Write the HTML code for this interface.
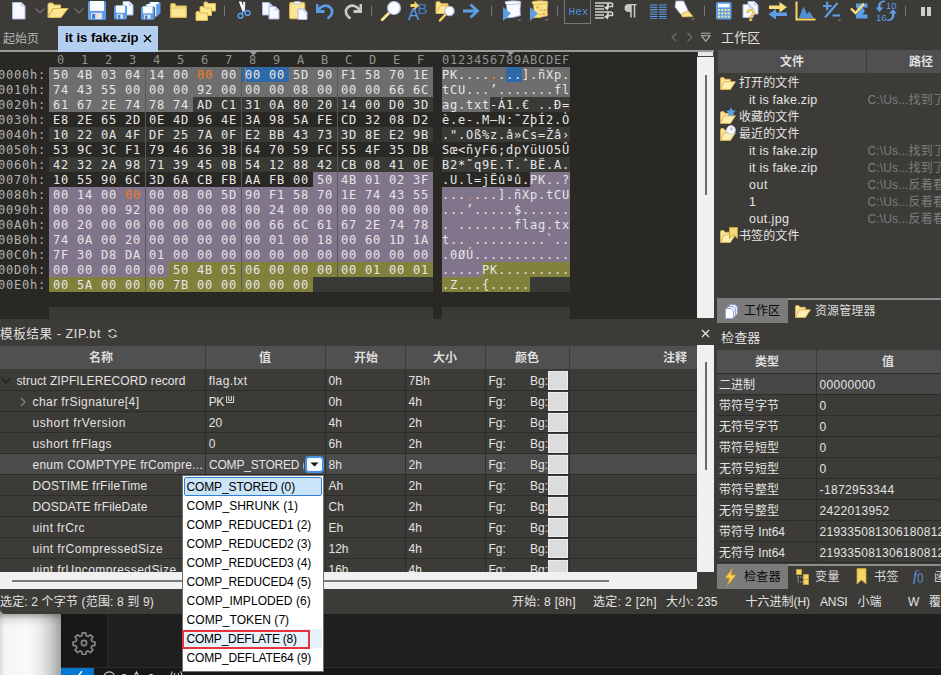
<!DOCTYPE html>
<html lang="zh-CN"><head><meta charset="utf-8"><title>010 Editor - it is fake.zip</title>
<style>
html,body{margin:0;padding:0;background:#1f1f1f;}
#root{position:relative;width:941px;height:675px;overflow:hidden;background:#3c3b37;font-family:"Liberation Sans","Noto Sans CJK SC",sans-serif;font-size:12px;color:#e4e4e4;}
.a{position:absolute;}
.t{white-space:pre;}
.m{font-family:"DejaVu Sans Mono","Liberation Mono",monospace;}
</style></head>
<body><div id="root">
<div class="a" style="left:0px;top:50px;width:714px;height:2px;background:#9a9a9a;"></div>
<div class="a" style="left:58px;top:26px;width:100px;height:26px;background:#b5cff0;"></div>
<span class="a t" id="t1" style="left:3px;top:30.5px;font-size:12px;line-height:16px;color:#b4b4b4;letter-spacing:-0.005px;">起始页</span>
<span class="a t" id="t2" style="left:65px;top:30.0px;font-size:13px;line-height:16px;color:#000;font-weight:bold;letter-spacing:-0.013px;">it is fake.zip</span>
<svg class="a" style="left:143px;top:34px" width="9" height="9" viewBox="0 0 9 9"><path d="M1 1L8 8M8 1L1 8" stroke="#000" stroke-width="1.4" fill="none"/></svg>
<svg class="a" style="left:670px;top:31px" width="42" height="13" viewBox="0 0 42 13"><path d="M6.3 2L2 6.2L6.3 10.4M17.5 2L21.8 6.2L17.5 10.4" stroke="#707070" stroke-width="1.2" fill="none"/><path d="M31 2.2H40.5M31.6 4.8H40L35.8 10.4Z" stroke="#b4b4b4" stroke-width="1.1" fill="none"/></svg>
<span class="a t" id="t3" style="left:721px;top:29.5px;font-size:13px;line-height:16px;color:#e0e0e0;letter-spacing:0.167px;">工作区</span>
<div class="a" style="left:0px;top:52px;width:697px;height:267px;background:#292824;"></div>
<div class="a" style="left:49px;top:67px;width:384px;height:15px;background:#393935;"></div>
<div class="a" style="left:442px;top:67px;width:128px;height:15px;background:#393935;"></div>
<div class="a" style="left:49px;top:67px;width:192px;height:15px;background:#6e6e6e;"></div>
<div class="a" style="left:442px;top:67px;width:64px;height:15px;background:#6e6e6e;"></div>
<div class="a" style="left:241px;top:67px;width:48px;height:15px;background:#2e6aa8;"></div>
<div class="a" style="left:506px;top:67px;width:16px;height:15px;background:#2e6aa8;"></div>
<div class="a" style="left:289px;top:67px;width:144px;height:15px;background:#6e6e6e;"></div>
<div class="a" style="left:522px;top:67px;width:48px;height:15px;background:#6e6e6e;"></div>
<div class="a" style="left:49px;top:82px;width:384px;height:15px;background:#6e6e6e;"></div>
<div class="a" style="left:442px;top:82px;width:128px;height:15px;background:#6e6e6e;"></div>
<div class="a" style="left:49px;top:97px;width:384px;height:15px;background:#393935;"></div>
<div class="a" style="left:442px;top:97px;width:128px;height:15px;background:#393935;"></div>
<div class="a" style="left:49px;top:97px;width:144px;height:15px;background:#6e6e6e;"></div>
<div class="a" style="left:442px;top:97px;width:48px;height:15px;background:#6e6e6e;"></div>
<div class="a" style="left:49px;top:127px;width:384px;height:15px;background:#393935;"></div>
<div class="a" style="left:442px;top:127px;width:128px;height:15px;background:#393935;"></div>
<div class="a" style="left:49px;top:157px;width:384px;height:15px;background:#393935;"></div>
<div class="a" style="left:442px;top:157px;width:128px;height:15px;background:#393935;"></div>
<div class="a" style="left:313px;top:172px;width:120px;height:15px;background:#81758b;"></div>
<div class="a" style="left:530px;top:172px;width:40px;height:15px;background:#81758b;"></div>
<div class="a" style="left:49px;top:187px;width:384px;height:15px;background:#393935;"></div>
<div class="a" style="left:442px;top:187px;width:128px;height:15px;background:#393935;"></div>
<div class="a" style="left:49px;top:187px;width:384px;height:15px;background:#81758b;"></div>
<div class="a" style="left:442px;top:187px;width:128px;height:15px;background:#81758b;"></div>
<div class="a" style="left:49px;top:202px;width:384px;height:15px;background:#81758b;"></div>
<div class="a" style="left:442px;top:202px;width:128px;height:15px;background:#81758b;"></div>
<div class="a" style="left:49px;top:217px;width:384px;height:15px;background:#393935;"></div>
<div class="a" style="left:442px;top:217px;width:128px;height:15px;background:#393935;"></div>
<div class="a" style="left:49px;top:217px;width:384px;height:15px;background:#81758b;"></div>
<div class="a" style="left:442px;top:217px;width:128px;height:15px;background:#81758b;"></div>
<div class="a" style="left:49px;top:232px;width:384px;height:15px;background:#81758b;"></div>
<div class="a" style="left:442px;top:232px;width:128px;height:15px;background:#81758b;"></div>
<div class="a" style="left:49px;top:247px;width:384px;height:15px;background:#393935;"></div>
<div class="a" style="left:442px;top:247px;width:128px;height:15px;background:#393935;"></div>
<div class="a" style="left:49px;top:247px;width:384px;height:15px;background:#81758b;"></div>
<div class="a" style="left:442px;top:247px;width:128px;height:15px;background:#81758b;"></div>
<div class="a" style="left:49px;top:262px;width:120px;height:15px;background:#81758b;"></div>
<div class="a" style="left:442px;top:262px;width:40px;height:15px;background:#81758b;"></div>
<div class="a" style="left:169px;top:262px;width:264px;height:15px;background:#81813c;"></div>
<div class="a" style="left:482px;top:262px;width:88px;height:15px;background:#81813c;"></div>
<div class="a" style="left:49px;top:277px;width:384px;height:15px;background:#393935;"></div>
<div class="a" style="left:442px;top:277px;width:128px;height:15px;background:#393935;"></div>
<div class="a" style="left:49px;top:277px;width:264px;height:15px;background:#81813c;"></div>
<div class="a" style="left:442px;top:277px;width:88px;height:15px;background:#81813c;"></div>
<div class="a" style="left:49px;top:307px;width:384px;height:12px;background:#393935;"></div>
<div class="a" style="left:442px;top:307px;width:128px;height:12px;background:#393935;"></div>
<div class="a" style="left:145px;top:67px;width:1px;height:225px;background:#595957;"></div>
<div class="a" style="left:241px;top:67px;width:1px;height:225px;background:#595957;"></div>
<div class="a" style="left:337px;top:67px;width:1px;height:210px;background:#595957;"></div>
<div class="a" style="left:245px;top:68px;width:1px;height:14px;background:#8a8274;"></div>
<span class="a t" id="t4" style="left:49px;top:51.5px;font-size:12px;line-height:16px;color:#929292;font-family:'DejaVu Sans Mono','Liberation Mono',monospace;letter-spacing:0.7754px;"> 0  1  2  3  4  5  6  7  8  9  A  B  C  D  E  F</span>
<span class="a t" id="t5" style="left:442px;top:51.5px;font-size:12px;line-height:16px;color:#929292;font-family:'DejaVu Sans Mono','Liberation Mono',monospace;letter-spacing:0.7754px;">0123456789ABCDEF</span>
<svg class="a" style="left:250px;top:52px" width="7" height="4" viewBox="0 0 7 4"><path d="M0 0H7L3.5 3.5Z" fill="#9a9a9a"/></svg>
<svg class="a" style="left:507px;top:52px" width="7" height="4" viewBox="0 0 7 4"><path d="M0 0H7L3.5 3.5Z" fill="#9a9a9a"/></svg>
<span class="a t" id="t6" style="left:-2px;top:66.5px;font-size:12px;line-height:16px;color:#b4b4b4;font-family:'DejaVu Sans Mono','Liberation Mono',monospace;letter-spacing:0.7754px;">0000h:</span>
<span class="a t" id="t7" style="left:53px;top:66.5px;font-size:12px;line-height:16px;color:#e6e6e6;font-family:'DejaVu Sans Mono','Liberation Mono',monospace;letter-spacing:0.7754px;">50 4B 03 04 14 00 <span style="color:#f27a24">00</span> 00 00 00 5D 90 F1 58 70 1E</span>
<span class="a t" id="t8" style="left:442px;top:66.5px;font-size:12px;line-height:16px;color:#e6e6e6;font-family:'DejaVu Sans Mono','Liberation Mono',monospace;letter-spacing:0.7754px;">PK....<span style="color:#f27a24">.</span>...].ñXp.</span>
<span class="a t" id="t9" style="left:-2px;top:81.5px;font-size:12px;line-height:16px;color:#b4b4b4;font-family:'DejaVu Sans Mono','Liberation Mono',monospace;letter-spacing:0.7754px;">0010h:</span>
<span class="a t" id="t10" style="left:53px;top:81.5px;font-size:12px;line-height:16px;color:#e6e6e6;font-family:'DejaVu Sans Mono','Liberation Mono',monospace;letter-spacing:0.7754px;">74 43 55 00 00 00 92 00 00 00 08 00 00 00 66 6C</span>
<span class="a t" id="t11" style="left:442px;top:81.5px;font-size:12px;line-height:16px;color:#e6e6e6;font-family:'DejaVu Sans Mono','Liberation Mono',monospace;letter-spacing:0.7754px;">tCU...’.......fl</span>
<span class="a t" id="t12" style="left:-2px;top:96.5px;font-size:12px;line-height:16px;color:#b4b4b4;font-family:'DejaVu Sans Mono','Liberation Mono',monospace;letter-spacing:0.7754px;">0020h:</span>
<span class="a t" id="t13" style="left:53px;top:96.5px;font-size:12px;line-height:16px;color:#e6e6e6;font-family:'DejaVu Sans Mono','Liberation Mono',monospace;letter-spacing:0.7754px;">61 67 2E 74 78 74 AD C1 31 0A 80 20 14 00 D0 3D</span>
<span class="a t" id="t14" style="left:442px;top:96.5px;font-size:12px;line-height:16px;color:#e6e6e6;font-family:'DejaVu Sans Mono','Liberation Mono',monospace;letter-spacing:0.7754px;">ag.txt-Á1.€ ..Ð=</span>
<span class="a t" id="t15" style="left:-2px;top:111.5px;font-size:12px;line-height:16px;color:#b4b4b4;font-family:'DejaVu Sans Mono','Liberation Mono',monospace;letter-spacing:0.7754px;">0030h:</span>
<span class="a t" id="t16" style="left:53px;top:111.5px;font-size:12px;line-height:16px;color:#e6e6e6;font-family:'DejaVu Sans Mono','Liberation Mono',monospace;letter-spacing:0.7754px;">E8 2E 65 2D 0E 4D 96 4E 3A 98 5A FE CD 32 08 D2</span>
<span class="a t" id="t17" style="left:442px;top:111.5px;font-size:12px;line-height:16px;color:#e6e6e6;font-family:'DejaVu Sans Mono','Liberation Mono',monospace;letter-spacing:0.7754px;">è.e-.M–N:˜ZþÍ2.Ò</span>
<span class="a t" id="t18" style="left:-2px;top:126.5px;font-size:12px;line-height:16px;color:#b4b4b4;font-family:'DejaVu Sans Mono','Liberation Mono',monospace;letter-spacing:0.7754px;">0040h:</span>
<span class="a t" id="t19" style="left:53px;top:126.5px;font-size:12px;line-height:16px;color:#e6e6e6;font-family:'DejaVu Sans Mono','Liberation Mono',monospace;letter-spacing:0.7754px;">10 22 0A 4F DF 25 7A 0F E2 BB 43 73 3D 8E E2 9B</span>
<span class="a t" id="t20" style="left:442px;top:126.5px;font-size:12px;line-height:16px;color:#e6e6e6;font-family:'DejaVu Sans Mono','Liberation Mono',monospace;letter-spacing:0.7754px;">.&quot;.Oß%z.â»Cs=Žâ›</span>
<span class="a t" id="t21" style="left:-2px;top:141.5px;font-size:12px;line-height:16px;color:#b4b4b4;font-family:'DejaVu Sans Mono','Liberation Mono',monospace;letter-spacing:0.7754px;">0050h:</span>
<span class="a t" id="t22" style="left:53px;top:141.5px;font-size:12px;line-height:16px;color:#e6e6e6;font-family:'DejaVu Sans Mono','Liberation Mono',monospace;letter-spacing:0.7754px;">53 9C 3C F1 79 46 36 3B 64 70 59 FC 55 4F 35 DB</span>
<span class="a t" id="t23" style="left:442px;top:141.5px;font-size:12px;line-height:16px;color:#e6e6e6;font-family:'DejaVu Sans Mono','Liberation Mono',monospace;letter-spacing:0.7754px;">Sœ&lt;ñyF6;dpYüUO5Û</span>
<span class="a t" id="t24" style="left:-2px;top:156.5px;font-size:12px;line-height:16px;color:#b4b4b4;font-family:'DejaVu Sans Mono','Liberation Mono',monospace;letter-spacing:0.7754px;">0060h:</span>
<span class="a t" id="t25" style="left:53px;top:156.5px;font-size:12px;line-height:16px;color:#e6e6e6;font-family:'DejaVu Sans Mono','Liberation Mono',monospace;letter-spacing:0.7754px;">42 32 2A 98 71 39 45 0B 54 12 88 42 CB 08 41 0E</span>
<span class="a t" id="t26" style="left:442px;top:156.5px;font-size:12px;line-height:16px;color:#e6e6e6;font-family:'DejaVu Sans Mono','Liberation Mono',monospace;letter-spacing:0.7754px;">B2*˜q9E.T.ˆBË.A.</span>
<span class="a t" id="t27" style="left:-2px;top:171.5px;font-size:12px;line-height:16px;color:#b4b4b4;font-family:'DejaVu Sans Mono','Liberation Mono',monospace;letter-spacing:0.7754px;">0070h:</span>
<span class="a t" id="t28" style="left:53px;top:171.5px;font-size:12px;line-height:16px;color:#e6e6e6;font-family:'DejaVu Sans Mono','Liberation Mono',monospace;letter-spacing:0.7754px;">10 55 90 6C 3D 6A CB FB AA FB 00 50 4B 01 02 3F</span>
<span class="a t" id="t29" style="left:442px;top:171.5px;font-size:12px;line-height:16px;color:#e6e6e6;font-family:'DejaVu Sans Mono','Liberation Mono',monospace;letter-spacing:0.7754px;">.U.l=jËûªû.PK..?</span>
<span class="a t" id="t30" style="left:-2px;top:186.5px;font-size:12px;line-height:16px;color:#b4b4b4;font-family:'DejaVu Sans Mono','Liberation Mono',monospace;letter-spacing:0.7754px;">0080h:</span>
<span class="a t" id="t31" style="left:53px;top:186.5px;font-size:12px;line-height:16px;color:#e6e6e6;font-family:'DejaVu Sans Mono','Liberation Mono',monospace;letter-spacing:0.7754px;">00 14 00 <span style="color:#f27a24">00</span> 00 08 00 5D 90 F1 58 70 1E 74 43 55</span>
<span class="a t" id="t32" style="left:442px;top:186.5px;font-size:12px;line-height:16px;color:#e6e6e6;font-family:'DejaVu Sans Mono','Liberation Mono',monospace;letter-spacing:0.7754px;">...<span style="color:#f27a24">.</span>...].ñXp.tCU</span>
<span class="a t" id="t33" style="left:-2px;top:201.5px;font-size:12px;line-height:16px;color:#b4b4b4;font-family:'DejaVu Sans Mono','Liberation Mono',monospace;letter-spacing:0.7754px;">0090h:</span>
<span class="a t" id="t34" style="left:53px;top:201.5px;font-size:12px;line-height:16px;color:#e6e6e6;font-family:'DejaVu Sans Mono','Liberation Mono',monospace;letter-spacing:0.7754px;">00 00 00 92 00 00 00 08 00 24 00 00 00 00 00 00</span>
<span class="a t" id="t35" style="left:442px;top:201.5px;font-size:12px;line-height:16px;color:#e6e6e6;font-family:'DejaVu Sans Mono','Liberation Mono',monospace;letter-spacing:0.7754px;">...’.....$......</span>
<span class="a t" id="t36" style="left:-2px;top:216.5px;font-size:12px;line-height:16px;color:#b4b4b4;font-family:'DejaVu Sans Mono','Liberation Mono',monospace;letter-spacing:0.7754px;">00A0h:</span>
<span class="a t" id="t37" style="left:53px;top:216.5px;font-size:12px;line-height:16px;color:#e6e6e6;font-family:'DejaVu Sans Mono','Liberation Mono',monospace;letter-spacing:0.7754px;">00 20 00 00 00 00 00 00 00 66 6C 61 67 2E 74 78</span>
<span class="a t" id="t38" style="left:442px;top:216.5px;font-size:12px;line-height:16px;color:#e6e6e6;font-family:'DejaVu Sans Mono','Liberation Mono',monospace;letter-spacing:0.7754px;">. .......flag.tx</span>
<span class="a t" id="t39" style="left:-2px;top:231.5px;font-size:12px;line-height:16px;color:#b4b4b4;font-family:'DejaVu Sans Mono','Liberation Mono',monospace;letter-spacing:0.7754px;">00B0h:</span>
<span class="a t" id="t40" style="left:53px;top:231.5px;font-size:12px;line-height:16px;color:#e6e6e6;font-family:'DejaVu Sans Mono','Liberation Mono',monospace;letter-spacing:0.7754px;">74 0A 00 20 00 00 00 00 00 01 00 18 00 60 1D 1A</span>
<span class="a t" id="t41" style="left:442px;top:231.5px;font-size:12px;line-height:16px;color:#e6e6e6;font-family:'DejaVu Sans Mono','Liberation Mono',monospace;letter-spacing:0.7754px;">t.. .........`..</span>
<span class="a t" id="t42" style="left:-2px;top:246.5px;font-size:12px;line-height:16px;color:#b4b4b4;font-family:'DejaVu Sans Mono','Liberation Mono',monospace;letter-spacing:0.7754px;">00C0h:</span>
<span class="a t" id="t43" style="left:53px;top:246.5px;font-size:12px;line-height:16px;color:#e6e6e6;font-family:'DejaVu Sans Mono','Liberation Mono',monospace;letter-spacing:0.7754px;">7F 30 D8 DA 01 00 00 00 00 00 00 00 00 00 00 00</span>
<span class="a t" id="t44" style="left:442px;top:246.5px;font-size:12px;line-height:16px;color:#e6e6e6;font-family:'DejaVu Sans Mono','Liberation Mono',monospace;letter-spacing:0.7754px;">.0ØÚ............</span>
<span class="a t" id="t45" style="left:-2px;top:261.5px;font-size:12px;line-height:16px;color:#b4b4b4;font-family:'DejaVu Sans Mono','Liberation Mono',monospace;letter-spacing:0.7754px;">00D0h:</span>
<span class="a t" id="t46" style="left:53px;top:261.5px;font-size:12px;line-height:16px;color:#e6e6e6;font-family:'DejaVu Sans Mono','Liberation Mono',monospace;letter-spacing:0.7754px;">00 00 00 00 00 50 4B 05 06 00 00 00 00 01 00 01</span>
<span class="a t" id="t47" style="left:442px;top:261.5px;font-size:12px;line-height:16px;color:#e6e6e6;font-family:'DejaVu Sans Mono','Liberation Mono',monospace;letter-spacing:0.7754px;">.....PK.........</span>
<span class="a t" id="t48" style="left:-2px;top:276.5px;font-size:12px;line-height:16px;color:#b4b4b4;font-family:'DejaVu Sans Mono','Liberation Mono',monospace;letter-spacing:0.7754px;">00E0h:</span>
<span class="a t" id="t49" style="left:53px;top:276.5px;font-size:12px;line-height:16px;color:#e6e6e6;font-family:'DejaVu Sans Mono','Liberation Mono',monospace;letter-spacing:0.7754px;">00 5A 00 00 00 7B 00 00 00 00 00</span>
<span class="a t" id="t50" style="left:442px;top:276.5px;font-size:12px;line-height:16px;color:#e6e6e6;font-family:'DejaVu Sans Mono','Liberation Mono',monospace;letter-spacing:0.7754px;">.Z...{.....</span>
<div class="a" style="left:697px;top:52px;width:17px;height:266px;background:#f0f0f0;"></div>
<div class="a" style="left:697px;top:52px;width:17px;height:5px;background:#e8e8e8;box-sizing:border-box;border:1px solid #444;border-top:none"></div>
<div class="a" style="left:705px;top:75px;width:2px;height:120px;background:#6c6c6c;"></div>
<div class="a" style="left:718px;top:50px;width:223px;height:23px;background:#505050;"></div>
<div class="a" style="left:866px;top:50px;width:1px;height:23px;background:#3a3a3a;"></div>
<span class="a t" id="t51" style="left:792px;top:53.5px;font-size:12px;line-height:16px;color:#dedede;font-weight:bold;transform:translateX(-50%);">文件</span>
<span class="a t" id="t52" style="left:921px;top:53.5px;font-size:12px;line-height:16px;color:#dedede;font-weight:bold;transform:translateX(-50%);">路径</span>
<svg class="a" style="left:720px;top:76.5px" width="16" height="13" viewBox="0 0 16 13"><path d="M0.6 12.2V1.6Q0.6 0.6 1.6 0.6H3.7L4.9 2.3H10.3V5H4L0.6 12.2Z" fill="#fbe7a0" stroke="#e0ba55" stroke-width="0.9" stroke-linejoin="round"/><path d="M4 4.8H15.4L10.4 12.4H0.6Z" fill="#fdeeb4" stroke="#e0ba55" stroke-width="0.9" stroke-linejoin="round"/></svg>
<span class="a t" id="t53" style="left:739px;top:74.5px;font-size:12px;line-height:16px;color:#e4e4e4;letter-spacing:0.097px;">打开的文件</span>
<span class="a t" id="t54" style="left:749px;top:91.5px;font-size:12.5px;line-height:16px;color:#e4e4e4;letter-spacing:0.228px;">it is fake.zip</span>
<span class="a t" id="t55" style="left:867.5px;top:91.5px;font-size:12px;line-height:16px;color:#7d7d7d;letter-spacing:0.135px;">C:\Us...找到了</span>
<svg class="a" style="left:720px;top:110.5px" width="16" height="13" viewBox="0 0 16 13"><path d="M0.6 12.2V1.6Q0.6 0.6 1.6 0.6H3.7L4.9 2.3H10.3V5H4L0.6 12.2Z" fill="#fbe7a0" stroke="#e0ba55" stroke-width="0.9" stroke-linejoin="round"/><path d="M4 4.8H15.4L10.4 12.4H0.6Z" fill="#fdeeb4" stroke="#e0ba55" stroke-width="0.9" stroke-linejoin="round"/></svg>
<svg class="a" style="left:725.5px;top:107.0px" width="10" height="10" viewBox="0 0 10 10"><path d="M5 0.2L6.5 3.3L9.9 3.8L7.4 6.1L8 9.6L5 7.9L2 9.6L2.6 6.1L0.1 3.8L3.5 3.3Z" fill="#5b9de6"/></svg>
<span class="a t" id="t56" style="left:739px;top:108.5px;font-size:12px;line-height:16px;color:#e4e4e4;letter-spacing:0.097px;">收藏的文件</span>
<svg class="a" style="left:720px;top:127.5px" width="16" height="13" viewBox="0 0 16 13"><path d="M0.6 12.2V1.6Q0.6 0.6 1.6 0.6H3.7L4.9 2.3H10.3V5H4L0.6 12.2Z" fill="#fbe7a0" stroke="#e0ba55" stroke-width="0.9" stroke-linejoin="round"/><path d="M4 4.8H15.4L10.4 12.4H0.6Z" fill="#fdeeb4" stroke="#e0ba55" stroke-width="0.9" stroke-linejoin="round"/></svg>
<svg class="a" style="left:725.5px;top:125.0px" width="10" height="10" viewBox="0 0 10 10"><circle cx="5" cy="5" r="4.4" fill="#f6f7fc" stroke="#c3cbe6" stroke-width="0.8"/><path d="M5 2.2V5L6.8 3.4" stroke="#7f93cc" stroke-width="0.8" fill="none"/></svg>
<span class="a t" id="t57" style="left:739px;top:125.5px;font-size:12px;line-height:16px;color:#e4e4e4;letter-spacing:0.097px;">最近的文件</span>
<span class="a t" id="t58" style="left:749px;top:142.5px;font-size:12.5px;line-height:16px;color:#e4e4e4;letter-spacing:0.228px;">it is fake.zip</span>
<span class="a t" id="t59" style="left:867.5px;top:142.5px;font-size:12px;line-height:16px;color:#7d7d7d;letter-spacing:0.135px;">C:\Us...找到了</span>
<span class="a t" id="t60" style="left:749px;top:159.5px;font-size:12.5px;line-height:16px;color:#e4e4e4;letter-spacing:0.228px;">it is fake.zip</span>
<span class="a t" id="t61" style="left:867.5px;top:159.5px;font-size:12px;line-height:16px;color:#7d7d7d;letter-spacing:0.135px;">C:\Us...找到了</span>
<span class="a t" id="t62" style="left:749px;top:176.5px;font-size:12.5px;line-height:16px;color:#e4e4e4;letter-spacing:0.536px;">out</span>
<span class="a t" id="t63" style="left:867.5px;top:176.5px;font-size:12px;line-height:16px;color:#7d7d7d;letter-spacing:0.135px;">C:\Us...反着看</span>
<span class="a t" id="t64" style="left:749px;top:193.5px;font-size:12.5px;line-height:16px;color:#e4e4e4;">1</span>
<span class="a t" id="t65" style="left:867.5px;top:193.5px;font-size:12px;line-height:16px;color:#7d7d7d;letter-spacing:0.135px;">C:\Us...反着看</span>
<span class="a t" id="t66" style="left:749px;top:210.5px;font-size:12.5px;line-height:16px;color:#e4e4e4;letter-spacing:0.424px;">out.jpg</span>
<span class="a t" id="t67" style="left:867.5px;top:210.5px;font-size:12px;line-height:16px;color:#7d7d7d;letter-spacing:0.135px;">C:\Us...反着看</span>
<svg class="a" style="left:720px;top:229.5px" width="16" height="13" viewBox="0 0 16 13"><path d="M0.6 12.2V1.6Q0.6 0.6 1.6 0.6H3.7L4.9 2.3H10.3V5H4L0.6 12.2Z" fill="#fbe7a0" stroke="#e0ba55" stroke-width="0.9" stroke-linejoin="round"/><path d="M4 4.8H15.4L10.4 12.4H0.6Z" fill="#fdeeb4" stroke="#e0ba55" stroke-width="0.9" stroke-linejoin="round"/></svg>
<svg class="a" style="left:729px;top:226.5px" width="9" height="12" viewBox="0 0 9 12"><path d="M0.5 0.5H8.5V11.5L4.5 8L0.5 11.5Z" fill="#f3d67a" stroke="#c9a43c" stroke-width="0.9"/></svg>
<span class="a t" id="t68" style="left:739px;top:227.5px;font-size:12px;line-height:16px;color:#e4e4e4;letter-spacing:0.097px;">书签的文件</span>
<div class="a" style="left:788px;top:298px;width:153px;height:2px;background:#8c8c8c;"></div>
<div class="a" style="left:717px;top:298px;width:71px;height:25px;background:#7b7b7b;"></div>
<svg class="a" style="left:724px;top:303px" width="15" height="16" viewBox="0 0 15 16"><path d="M5.5 1.5H11L13.5 4V11.5H5.5Z" fill="#dfe6f5" stroke="#8ea0c8" stroke-width="0.9"/><path d="M3.5 3.5H9L11.5 6V13.5H3.5Z" fill="#eef2fb" stroke="#8ea0c8" stroke-width="0.9"/><path d="M1.5 5.5H7L9.5 8V15.5H1.5Z" fill="#fff" stroke="#8ea0c8" stroke-width="0.9"/></svg>
<span class="a t" id="t69" style="left:744px;top:302.5px;font-size:12px;line-height:16px;color:#0a0a0a;letter-spacing:-0.005px;">工作区</span>
<svg class="a" style="left:795px;top:305px" width="16" height="13" viewBox="0 0 16 13"><path d="M0.6 12.2V1.6Q0.6 0.6 1.6 0.6H3.7L4.9 2.3H10.3V5H4L0.6 12.2Z" fill="#fbe7a0" stroke="#e0ba55" stroke-width="0.9" stroke-linejoin="round"/><path d="M4 4.8H15.4L10.4 12.4H0.6Z" fill="#fdeeb4" stroke="#e0ba55" stroke-width="0.9" stroke-linejoin="round"/></svg>
<span class="a t" id="t70" style="left:815px;top:302.5px;font-size:12px;line-height:16px;color:#dcdcdc;letter-spacing:0.097px;">资源管理器</span>
<span class="a t" id="t71" style="left:721px;top:329.5px;font-size:13px;line-height:16px;color:#e0e0e0;letter-spacing:0.167px;">检查器</span>
<div class="a" style="left:717px;top:350px;width:224px;height:23px;background:#505050;"></div>
<div class="a" style="left:717px;top:373px;width:224px;height:1px;background:#2d2c2a;"></div>
<div class="a" style="left:816px;top:350px;width:1px;height:23px;background:#3a3a3a;"></div>
<span class="a t" id="t72" style="left:767px;top:353.5px;font-size:12px;line-height:16px;color:#dedede;font-weight:bold;transform:translateX(-50%);">类型</span>
<span class="a t" id="t73" style="left:888px;top:353.5px;font-size:12px;line-height:16px;color:#dedede;font-weight:bold;transform:translateX(-50%);">值</span>
<div class="a" style="left:717px;top:374px;width:224px;height:20px;background:#474747;"></div>
<div class="a" style="left:717px;top:394px;width:224px;height:1px;background:#2d2c2a;"></div>
<div class="a" style="left:816px;top:374px;width:1px;height:21px;background:#2d2c2a;"></div>
<span class="a t" id="t74" style="left:719px;top:376.5px;font-size:12px;line-height:16px;color:#e4e4e4;">二进制</span>
<span class="a t" id="t75" style="left:819.5px;top:376.5px;font-size:12px;line-height:16px;color:#e4e4e4;letter-spacing:0.326px;">00000000</span>
<div class="a" style="left:717px;top:415px;width:224px;height:1px;background:#2d2c2a;"></div>
<div class="a" style="left:816px;top:395px;width:1px;height:21px;background:#2d2c2a;"></div>
<span class="a t" id="t76" style="left:719px;top:397.5px;font-size:12px;line-height:16px;color:#e4e4e4;">带符号字节</span>
<span class="a t" id="t77" style="left:819.5px;top:397.5px;font-size:12px;line-height:16px;color:#e4e4e4;">0</span>
<div class="a" style="left:717px;top:436px;width:224px;height:1px;background:#2d2c2a;"></div>
<div class="a" style="left:816px;top:416px;width:1px;height:21px;background:#2d2c2a;"></div>
<span class="a t" id="t78" style="left:719px;top:418.5px;font-size:12px;line-height:16px;color:#e4e4e4;">无符号字节</span>
<span class="a t" id="t79" style="left:819.5px;top:418.5px;font-size:12px;line-height:16px;color:#e4e4e4;">0</span>
<div class="a" style="left:717px;top:457px;width:224px;height:1px;background:#2d2c2a;"></div>
<div class="a" style="left:816px;top:437px;width:1px;height:21px;background:#2d2c2a;"></div>
<span class="a t" id="t80" style="left:719px;top:439.5px;font-size:12px;line-height:16px;color:#e4e4e4;">带符号短型</span>
<span class="a t" id="t81" style="left:819.5px;top:439.5px;font-size:12px;line-height:16px;color:#e4e4e4;">0</span>
<div class="a" style="left:717px;top:478px;width:224px;height:1px;background:#2d2c2a;"></div>
<div class="a" style="left:816px;top:458px;width:1px;height:21px;background:#2d2c2a;"></div>
<span class="a t" id="t82" style="left:719px;top:460.5px;font-size:12px;line-height:16px;color:#e4e4e4;">无符号短型</span>
<span class="a t" id="t83" style="left:819.5px;top:460.5px;font-size:12px;line-height:16px;color:#e4e4e4;">0</span>
<div class="a" style="left:717px;top:499px;width:224px;height:1px;background:#2d2c2a;"></div>
<div class="a" style="left:816px;top:479px;width:1px;height:21px;background:#2d2c2a;"></div>
<span class="a t" id="t84" style="left:719px;top:481.5px;font-size:12px;line-height:16px;color:#e4e4e4;">带符号整型</span>
<span class="a t" id="t85" style="left:819.5px;top:481.5px;font-size:12px;line-height:16px;color:#e4e4e4;letter-spacing:0.386px;">-1872953344</span>
<div class="a" style="left:717px;top:520px;width:224px;height:1px;background:#2d2c2a;"></div>
<div class="a" style="left:816px;top:500px;width:1px;height:21px;background:#2d2c2a;"></div>
<span class="a t" id="t86" style="left:719px;top:502.5px;font-size:12px;line-height:16px;color:#e4e4e4;">无符号整型</span>
<span class="a t" id="t87" style="left:819.5px;top:502.5px;font-size:12px;line-height:16px;color:#e4e4e4;letter-spacing:0.325px;">2422013952</span>
<div class="a" style="left:717px;top:541px;width:224px;height:1px;background:#2d2c2a;"></div>
<div class="a" style="left:816px;top:521px;width:1px;height:21px;background:#2d2c2a;"></div>
<span class="a t" id="t88" style="left:719px;top:523.5px;font-size:12px;line-height:16px;color:#e4e4e4;">带符号 Int64</span>
<span class="a t" id="t89" style="left:819.5px;top:523.5px;font-size:12px;line-height:16px;color:#e4e4e4;letter-spacing:0.273px;">2193350813061808128</span>
<div class="a" style="left:717px;top:562px;width:224px;height:1px;background:#2d2c2a;"></div>
<div class="a" style="left:816px;top:542px;width:1px;height:21px;background:#2d2c2a;"></div>
<span class="a t" id="t90" style="left:719px;top:544.5px;font-size:12px;line-height:16px;color:#e4e4e4;">无符号 Int64</span>
<span class="a t" id="t91" style="left:819.5px;top:544.5px;font-size:12px;line-height:16px;color:#e4e4e4;letter-spacing:0.273px;">2193350813061808128</span>
<div class="a" style="left:717px;top:563px;width:224px;height:1px;background:#3c3b37;"></div>
<div class="a" style="left:788px;top:564px;width:153px;height:2px;background:#8c8c8c;"></div>
<div class="a" style="left:717px;top:564px;width:71px;height:25px;background:#7b7b7b;"></div>
<svg class="a" style="left:723px;top:568px" width="15" height="18" viewBox="0 0 15 18"><path d="M9.5 0.5L2 10H6.5L4.5 17.5L13 7H8Z" fill="#f6cf4f" stroke="#c99a20" stroke-width="0.7" stroke-linejoin="round"/></svg>
<span class="a t" id="t92" style="left:744px;top:569.0px;font-size:12px;line-height:16px;color:#0a0a0a;letter-spacing:0.333px;">检查器</span>
<svg class="a" style="left:796px;top:569px" width="14" height="16" viewBox="0 0 14 16"><path d="M2 3V13H7M2 8H7" stroke="#bdbdbd" stroke-width="1" stroke-dasharray="1 1" fill="none"/><rect x="0.5" y="0.5" width="5" height="5" fill="#f6d564" stroke="#c9a43c" stroke-width="0.8"/><rect x="7.5" y="5.5" width="5" height="5" fill="#f6d564" stroke="#c9a43c" stroke-width="0.8"/><rect x="7.5" y="10.5" width="5" height="5" fill="#f6d564" stroke="#c9a43c" stroke-width="0.8"/></svg>
<span class="a t" id="t93" style="left:815px;top:569.0px;font-size:12px;line-height:16px;color:#dcdcdc;letter-spacing:0.500px;">变量</span>
<svg class="a" style="left:856px;top:568px" width="11" height="17" viewBox="0 0 11 17"><path d="M1 0.5H10V16L5.5 12L1 16Z" fill="#f6d564" stroke="#c9a43c" stroke-width="0.8"/></svg>
<span class="a t" id="t94" style="left:874px;top:569.0px;font-size:12px;line-height:16px;color:#dcdcdc;letter-spacing:0.500px;">书签</span>
<span class="a t" id="t95" style="left:913px;top:569.0px;font-size:12px;line-height:16px;color:#5d9be6;"><i style="font-family:'Liberation Serif',serif;font-size:14px">f</i><span style="font-size:10px">()</span></span>
<span class="a t" id="t96" style="left:934px;top:569.0px;font-size:12px;line-height:16px;color:#dcdcdc;">函数</span>
<span class="a t" id="t97" style="left:0px;top:325.5px;font-size:12.6px;line-height:16px;color:#e0e0e0;letter-spacing:0.573px;">模板结果 - ZIP.bt</span>
<svg class="a" style="left:107px;top:328px" width="11" height="11" viewBox="0 0 11 11"><path d="M9.3 4.2A4 4 0 0 0 2 3.6M1.7 6.8A4 4 0 0 0 9 7.4" stroke="#d0d0d0" stroke-width="1.1" fill="none"/><path d="M0.8 1.8L2.1 4.6L4.8 3.2Z M10.2 9.2L8.9 6.4L6.2 7.8Z" fill="#d0d0d0"/></svg>
<svg class="a" style="left:701px;top:329px" width="9" height="9" viewBox="0 0 9 9"><path d="M1 1L8 8M8 1L1 8" stroke="#e8e8e8" stroke-width="1.2" fill="none"/></svg>
<div class="a" style="left:0px;top:346px;width:697px;height:23px;background:#505050;"></div>
<div class="a" style="left:0px;top:369px;width:697px;height:1px;background:#3c3b37;"></div>
<div class="a" style="left:205px;top:346px;width:1px;height:23px;background:#3a3a3a;"></div>
<div class="a" style="left:325px;top:346px;width:1px;height:23px;background:#3a3a3a;"></div>
<div class="a" style="left:405px;top:346px;width:1px;height:23px;background:#3a3a3a;"></div>
<div class="a" style="left:485px;top:346px;width:1px;height:23px;background:#3a3a3a;"></div>
<div class="a" style="left:569px;top:346px;width:1px;height:23px;background:#3a3a3a;"></div>
<span class="a t" id="t98" style="left:101px;top:349.5px;font-size:12px;line-height:16px;color:#dedede;font-weight:bold;transform:translateX(-50%);">名称</span>
<span class="a t" id="t99" style="left:265px;top:349.5px;font-size:12px;line-height:16px;color:#dedede;font-weight:bold;transform:translateX(-50%);">值</span>
<span class="a t" id="t100" style="left:366px;top:349.5px;font-size:12px;line-height:16px;color:#dedede;font-weight:bold;transform:translateX(-50%);">开始</span>
<span class="a t" id="t101" style="left:445px;top:349.5px;font-size:12px;line-height:16px;color:#dedede;font-weight:bold;transform:translateX(-50%);">大小</span>
<span class="a t" id="t102" style="left:527px;top:349.5px;font-size:12px;line-height:16px;color:#dedede;font-weight:bold;transform:translateX(-50%);">颜色</span>
<span class="a t" id="t103" style="left:675px;top:349.5px;font-size:12px;line-height:16px;color:#dedede;font-weight:bold;transform:translateX(-50%);">注释</span>
<div class="a" style="left:0px;top:390px;width:697px;height:1px;background:#2d2c2a;"></div>
<div class="a" style="left:205px;top:370px;width:1px;height:21px;background:#2d2c2a;"></div>
<div class="a" style="left:325px;top:370px;width:1px;height:21px;background:#2d2c2a;"></div>
<div class="a" style="left:405px;top:370px;width:1px;height:21px;background:#2d2c2a;"></div>
<div class="a" style="left:485px;top:370px;width:1px;height:21px;background:#2d2c2a;"></div>
<div class="a" style="left:569px;top:370px;width:1px;height:21px;background:#2d2c2a;"></div>
<span class="a t" id="t104" style="left:16.5px;top:372.5px;font-size:12px;line-height:16px;color:#e4e4e4;letter-spacing:0.109px;">struct ZIPFILERECORD record</span>
<svg class="a" style="left:1px;top:376.5px" width="10" height="7" viewBox="0 0 10 7"><path d="M0.5 1L5 5.8L9.5 1" stroke="#1d1d1d" stroke-width="1.2" fill="none"/></svg>
<span class="a t" id="t105" style="left:208.7px;top:372.5px;font-size:12px;line-height:16px;color:#e4e4e4;letter-spacing:0.430px;">flag.txt</span>
<span class="a t" id="t106" style="left:328.5px;top:372.5px;font-size:12px;line-height:16px;color:#e4e4e4;">0h</span>
<span class="a t" id="t107" style="left:408.5px;top:372.5px;font-size:12px;line-height:16px;color:#e4e4e4;">7Bh</span>
<span class="a t" id="t108" style="left:488.5px;top:372.5px;font-size:12px;line-height:16px;color:#e4e4e4;">Fg:</span>
<span class="a t" id="t109" style="left:530px;top:372.5px;font-size:12px;line-height:16px;color:#e4e4e4;">Bg:</span>
<div class="a" style="left:548px;top:371px;width:20px;height:19px;background:#dcdcdc;box-sizing:border-box;border:1px solid #ededed"></div>
<div class="a" style="left:0px;top:411px;width:697px;height:1px;background:#2d2c2a;"></div>
<div class="a" style="left:205px;top:391px;width:1px;height:21px;background:#2d2c2a;"></div>
<div class="a" style="left:325px;top:391px;width:1px;height:21px;background:#2d2c2a;"></div>
<div class="a" style="left:405px;top:391px;width:1px;height:21px;background:#2d2c2a;"></div>
<div class="a" style="left:485px;top:391px;width:1px;height:21px;background:#2d2c2a;"></div>
<div class="a" style="left:569px;top:391px;width:1px;height:21px;background:#2d2c2a;"></div>
<span class="a t" id="t110" style="left:32.5px;top:393.5px;font-size:12px;line-height:16px;color:#e4e4e4;letter-spacing:0.435px;">char frSignature[4]</span>
<svg class="a" style="left:20px;top:396.5px" width="6" height="10" viewBox="0 0 6 10"><path d="M1 0.8L5 5L1 9.2" stroke="#8c8c8c" stroke-width="1.2" fill="none"/></svg>
<span class="a t" id="t111" style="left:208.7px;top:393.5px;font-size:12px;line-height:16px;color:#e4e4e4;letter-spacing:-0.455px;">PK</span>
<span class="a t" id="t112" style="left:328.5px;top:393.5px;font-size:12px;line-height:16px;color:#e4e4e4;">0h</span>
<span class="a t" id="t113" style="left:408.5px;top:393.5px;font-size:12px;line-height:16px;color:#e4e4e4;">4h</span>
<span class="a t" id="t114" style="left:488.5px;top:393.5px;font-size:12px;line-height:16px;color:#e4e4e4;">Fg:</span>
<span class="a t" id="t115" style="left:530px;top:393.5px;font-size:12px;line-height:16px;color:#e4e4e4;">Bg:</span>
<div class="a" style="left:548px;top:392px;width:20px;height:19px;background:#dcdcdc;box-sizing:border-box;border:1px solid #ededed"></div>
<div class="a" style="left:0px;top:432px;width:697px;height:1px;background:#2d2c2a;"></div>
<div class="a" style="left:205px;top:412px;width:1px;height:21px;background:#2d2c2a;"></div>
<div class="a" style="left:325px;top:412px;width:1px;height:21px;background:#2d2c2a;"></div>
<div class="a" style="left:405px;top:412px;width:1px;height:21px;background:#2d2c2a;"></div>
<div class="a" style="left:485px;top:412px;width:1px;height:21px;background:#2d2c2a;"></div>
<div class="a" style="left:569px;top:412px;width:1px;height:21px;background:#2d2c2a;"></div>
<span class="a t" id="t116" style="left:32.5px;top:414.5px;font-size:12px;line-height:16px;color:#e4e4e4;letter-spacing:0.591px;">ushort frVersion</span>
<span class="a t" id="t117" style="left:208.7px;top:414.5px;font-size:12px;line-height:16px;color:#e4e4e4;letter-spacing:0.222px;">20</span>
<span class="a t" id="t118" style="left:328.5px;top:414.5px;font-size:12px;line-height:16px;color:#e4e4e4;">4h</span>
<span class="a t" id="t119" style="left:408.5px;top:414.5px;font-size:12px;line-height:16px;color:#e4e4e4;">2h</span>
<span class="a t" id="t120" style="left:488.5px;top:414.5px;font-size:12px;line-height:16px;color:#e4e4e4;">Fg:</span>
<span class="a t" id="t121" style="left:530px;top:414.5px;font-size:12px;line-height:16px;color:#e4e4e4;">Bg:</span>
<div class="a" style="left:548px;top:413px;width:20px;height:19px;background:#dcdcdc;box-sizing:border-box;border:1px solid #ededed"></div>
<div class="a" style="left:0px;top:453px;width:697px;height:1px;background:#2d2c2a;"></div>
<div class="a" style="left:205px;top:433px;width:1px;height:21px;background:#2d2c2a;"></div>
<div class="a" style="left:325px;top:433px;width:1px;height:21px;background:#2d2c2a;"></div>
<div class="a" style="left:405px;top:433px;width:1px;height:21px;background:#2d2c2a;"></div>
<div class="a" style="left:485px;top:433px;width:1px;height:21px;background:#2d2c2a;"></div>
<div class="a" style="left:569px;top:433px;width:1px;height:21px;background:#2d2c2a;"></div>
<span class="a t" id="t122" style="left:32.5px;top:435.5px;font-size:12px;line-height:16px;color:#e4e4e4;letter-spacing:0.438px;">ushort frFlags</span>
<span class="a t" id="t123" style="left:208.7px;top:435.5px;font-size:12px;line-height:16px;color:#e4e4e4;">0</span>
<span class="a t" id="t124" style="left:328.5px;top:435.5px;font-size:12px;line-height:16px;color:#e4e4e4;">6h</span>
<span class="a t" id="t125" style="left:408.5px;top:435.5px;font-size:12px;line-height:16px;color:#e4e4e4;">2h</span>
<span class="a t" id="t126" style="left:488.5px;top:435.5px;font-size:12px;line-height:16px;color:#e4e4e4;">Fg:</span>
<span class="a t" id="t127" style="left:530px;top:435.5px;font-size:12px;line-height:16px;color:#e4e4e4;">Bg:</span>
<div class="a" style="left:548px;top:434px;width:20px;height:19px;background:#dcdcdc;box-sizing:border-box;border:1px solid #ededed"></div>
<div class="a" style="left:0px;top:454px;width:697px;height:21px;background:#4b4b4b;"></div>
<div class="a" style="left:0px;top:474px;width:697px;height:1px;background:#2d2c2a;"></div>
<div class="a" style="left:205px;top:454px;width:1px;height:21px;background:#2d2c2a;"></div>
<div class="a" style="left:325px;top:454px;width:1px;height:21px;background:#2d2c2a;"></div>
<div class="a" style="left:405px;top:454px;width:1px;height:21px;background:#2d2c2a;"></div>
<div class="a" style="left:485px;top:454px;width:1px;height:21px;background:#2d2c2a;"></div>
<div class="a" style="left:569px;top:454px;width:1px;height:21px;background:#2d2c2a;"></div>
<span class="a t" id="t128" style="left:32.5px;top:456.5px;font-size:12px;line-height:16px;color:#e4e4e4;letter-spacing:0.258px;">enum COMPTYPE frCompre...</span>
<div class="a" style="left:206px;top:454px;width:98px;height:20px;overflow:hidden"><span class="a t" style="left:3px;top:2.5px;font-size:12px;line-height:16px;color:#e4e4e4;letter-spacing:-0.2px">COMP_STORED (0)</span></div>
<span class="a t" id="t129" style="left:328.5px;top:456.5px;font-size:12px;line-height:16px;color:#e4e4e4;">8h</span>
<span class="a t" id="t130" style="left:408.5px;top:456.5px;font-size:12px;line-height:16px;color:#e4e4e4;">2h</span>
<span class="a t" id="t131" style="left:488.5px;top:456.5px;font-size:12px;line-height:16px;color:#e4e4e4;">Fg:</span>
<span class="a t" id="t132" style="left:530px;top:456.5px;font-size:12px;line-height:16px;color:#e4e4e4;">Bg:</span>
<div class="a" style="left:548px;top:455px;width:20px;height:19px;background:#dcdcdc;box-sizing:border-box;border:1px solid #ededed"></div>
<div class="a" style="left:0px;top:495px;width:697px;height:1px;background:#2d2c2a;"></div>
<div class="a" style="left:205px;top:475px;width:1px;height:21px;background:#2d2c2a;"></div>
<div class="a" style="left:325px;top:475px;width:1px;height:21px;background:#2d2c2a;"></div>
<div class="a" style="left:405px;top:475px;width:1px;height:21px;background:#2d2c2a;"></div>
<div class="a" style="left:485px;top:475px;width:1px;height:21px;background:#2d2c2a;"></div>
<div class="a" style="left:569px;top:475px;width:1px;height:21px;background:#2d2c2a;"></div>
<span class="a t" id="t133" style="left:32.5px;top:477.5px;font-size:12px;line-height:16px;color:#e4e4e4;letter-spacing:0.228px;">DOSTIME frFileTime</span>
<span class="a t" id="t134" style="left:328.5px;top:477.5px;font-size:12px;line-height:16px;color:#e4e4e4;">Ah</span>
<span class="a t" id="t135" style="left:408.5px;top:477.5px;font-size:12px;line-height:16px;color:#e4e4e4;">2h</span>
<span class="a t" id="t136" style="left:488.5px;top:477.5px;font-size:12px;line-height:16px;color:#e4e4e4;">Fg:</span>
<span class="a t" id="t137" style="left:530px;top:477.5px;font-size:12px;line-height:16px;color:#e4e4e4;">Bg:</span>
<div class="a" style="left:548px;top:476px;width:20px;height:19px;background:#dcdcdc;box-sizing:border-box;border:1px solid #ededed"></div>
<div class="a" style="left:0px;top:516px;width:697px;height:1px;background:#2d2c2a;"></div>
<div class="a" style="left:205px;top:496px;width:1px;height:21px;background:#2d2c2a;"></div>
<div class="a" style="left:325px;top:496px;width:1px;height:21px;background:#2d2c2a;"></div>
<div class="a" style="left:405px;top:496px;width:1px;height:21px;background:#2d2c2a;"></div>
<div class="a" style="left:485px;top:496px;width:1px;height:21px;background:#2d2c2a;"></div>
<div class="a" style="left:569px;top:496px;width:1px;height:21px;background:#2d2c2a;"></div>
<span class="a t" id="t138" style="left:32.5px;top:498.5px;font-size:12px;line-height:16px;color:#e4e4e4;letter-spacing:0.140px;">DOSDATE frFileDate</span>
<span class="a t" id="t139" style="left:328.5px;top:498.5px;font-size:12px;line-height:16px;color:#e4e4e4;">Ch</span>
<span class="a t" id="t140" style="left:408.5px;top:498.5px;font-size:12px;line-height:16px;color:#e4e4e4;">2h</span>
<span class="a t" id="t141" style="left:488.5px;top:498.5px;font-size:12px;line-height:16px;color:#e4e4e4;">Fg:</span>
<span class="a t" id="t142" style="left:530px;top:498.5px;font-size:12px;line-height:16px;color:#e4e4e4;">Bg:</span>
<div class="a" style="left:548px;top:497px;width:20px;height:19px;background:#dcdcdc;box-sizing:border-box;border:1px solid #ededed"></div>
<div class="a" style="left:0px;top:537px;width:697px;height:1px;background:#2d2c2a;"></div>
<div class="a" style="left:205px;top:517px;width:1px;height:21px;background:#2d2c2a;"></div>
<div class="a" style="left:325px;top:517px;width:1px;height:21px;background:#2d2c2a;"></div>
<div class="a" style="left:405px;top:517px;width:1px;height:21px;background:#2d2c2a;"></div>
<div class="a" style="left:485px;top:517px;width:1px;height:21px;background:#2d2c2a;"></div>
<div class="a" style="left:569px;top:517px;width:1px;height:21px;background:#2d2c2a;"></div>
<span class="a t" id="t143" style="left:32.5px;top:519.5px;font-size:12px;line-height:16px;color:#e4e4e4;letter-spacing:0.383px;">uint frCrc</span>
<span class="a t" id="t144" style="left:328.5px;top:519.5px;font-size:12px;line-height:16px;color:#e4e4e4;">Eh</span>
<span class="a t" id="t145" style="left:408.5px;top:519.5px;font-size:12px;line-height:16px;color:#e4e4e4;">4h</span>
<span class="a t" id="t146" style="left:488.5px;top:519.5px;font-size:12px;line-height:16px;color:#e4e4e4;">Fg:</span>
<span class="a t" id="t147" style="left:530px;top:519.5px;font-size:12px;line-height:16px;color:#e4e4e4;">Bg:</span>
<div class="a" style="left:548px;top:518px;width:20px;height:19px;background:#dcdcdc;box-sizing:border-box;border:1px solid #ededed"></div>
<div class="a" style="left:0px;top:558px;width:697px;height:1px;background:#2d2c2a;"></div>
<div class="a" style="left:205px;top:538px;width:1px;height:21px;background:#2d2c2a;"></div>
<div class="a" style="left:325px;top:538px;width:1px;height:21px;background:#2d2c2a;"></div>
<div class="a" style="left:405px;top:538px;width:1px;height:21px;background:#2d2c2a;"></div>
<div class="a" style="left:485px;top:538px;width:1px;height:21px;background:#2d2c2a;"></div>
<div class="a" style="left:569px;top:538px;width:1px;height:21px;background:#2d2c2a;"></div>
<span class="a t" id="t148" style="left:32.5px;top:540.5px;font-size:12px;line-height:16px;color:#e4e4e4;letter-spacing:0.434px;">uint frCompressedSize</span>
<span class="a t" id="t149" style="left:328.5px;top:540.5px;font-size:12px;line-height:16px;color:#e4e4e4;">12h</span>
<span class="a t" id="t150" style="left:408.5px;top:540.5px;font-size:12px;line-height:16px;color:#e4e4e4;">4h</span>
<span class="a t" id="t151" style="left:488.5px;top:540.5px;font-size:12px;line-height:16px;color:#e4e4e4;">Fg:</span>
<span class="a t" id="t152" style="left:530px;top:540.5px;font-size:12px;line-height:16px;color:#e4e4e4;">Bg:</span>
<div class="a" style="left:548px;top:539px;width:20px;height:19px;background:#dcdcdc;box-sizing:border-box;border:1px solid #ededed"></div>
<div class="a" style="left:0px;top:579px;width:697px;height:1px;background:#2d2c2a;"></div>
<div class="a" style="left:205px;top:559px;width:1px;height:21px;background:#2d2c2a;"></div>
<div class="a" style="left:325px;top:559px;width:1px;height:21px;background:#2d2c2a;"></div>
<div class="a" style="left:405px;top:559px;width:1px;height:21px;background:#2d2c2a;"></div>
<div class="a" style="left:485px;top:559px;width:1px;height:21px;background:#2d2c2a;"></div>
<div class="a" style="left:569px;top:559px;width:1px;height:21px;background:#2d2c2a;"></div>
<span class="a t" id="t153" style="left:32.5px;top:561.5px;font-size:12px;line-height:16px;color:#e4e4e4;letter-spacing:0.432px;">uint frUncompressedSize</span>
<span class="a t" id="t154" style="left:328.5px;top:561.5px;font-size:12px;line-height:16px;color:#e4e4e4;">16h</span>
<span class="a t" id="t155" style="left:408.5px;top:561.5px;font-size:12px;line-height:16px;color:#e4e4e4;">4h</span>
<span class="a t" id="t156" style="left:488.5px;top:561.5px;font-size:12px;line-height:16px;color:#e4e4e4;">Fg:</span>
<span class="a t" id="t157" style="left:530px;top:561.5px;font-size:12px;line-height:16px;color:#e4e4e4;">Bg:</span>
<div class="a" style="left:548px;top:560px;width:20px;height:19px;background:#dcdcdc;box-sizing:border-box;border:1px solid #ededed"></div>
<svg class="a" style="left:225.5px;top:395.5px" width="9" height="8" viewBox="0 0 9 8"><path d="M0.6 0V6.5H7.6V0M2.8 0V4.4H5.4V0" stroke="#e4e4e4" stroke-width="0.95" fill="none"/></svg>
<div class="a" style="left:304.5px;top:455.5px;width:19.5px;height:17.5px;background:#f6faff;box-sizing:border-box;border:2px solid #4a8fe0;border-radius:4px"></div>
<svg class="a" style="left:310px;top:462px" width="9" height="5" viewBox="0 0 9 5"><path d="M0.5 0.5H8.5L4.5 4.5Z" fill="#111"/></svg>
<div class="a" style="left:697px;top:345px;width:17px;height:227px;background:#f0f0f0;"></div>
<div class="a" style="left:705px;top:362px;width:2px;height:108px;background:#6c6c6c;"></div>
<div class="a" style="left:0px;top:572px;width:697px;height:17px;background:#f0f0f0;"></div>
<div class="a" style="left:12px;top:580px;width:597px;height:2px;background:#7a7a7a;"></div>
<div class="a" style="left:0px;top:589px;width:941px;height:25px;background:#3c3b37;"></div>
<span class="a t" id="t158" style="left:0px;top:594.0px;font-size:12px;line-height:16px;color:#e4e4e4;letter-spacing:0.157px;">选定: 2 个字节 (范围: 8 到 9)</span>
<span class="a t" id="t159" style="left:512px;top:594.0px;font-size:12px;line-height:16px;color:#e4e4e4;letter-spacing:0.330px;">开始: 8 [8h]</span>
<span class="a t" id="t160" style="left:593px;top:594.0px;font-size:12px;line-height:16px;color:#e4e4e4;letter-spacing:0.330px;">选定: 2 [2h]</span>
<span class="a t" id="t161" style="left:666px;top:594.0px;font-size:12px;line-height:16px;color:#e4e4e4;letter-spacing:0.114px;">大小: 235</span>
<span class="a t" id="t162" style="left:745.5px;top:594.0px;font-size:12px;line-height:16px;color:#e4e4e4;letter-spacing:-0.022px;">十六进制(H)</span>
<span class="a t" id="t163" style="left:820px;top:594.0px;font-size:12px;line-height:16px;color:#e4e4e4;letter-spacing:-0.129px;">ANSI</span>
<span class="a t" id="t164" style="left:857.5px;top:594.0px;font-size:12px;line-height:16px;color:#e4e4e4;letter-spacing:0.000px;">小端</span>
<span class="a t" id="t165" style="left:908px;top:594.0px;font-size:12px;line-height:16px;color:#e4e4e4;letter-spacing:0.672px;">W</span>
<span class="a t" id="t166" style="left:929px;top:594.0px;font-size:12px;line-height:16px;color:#e4e4e4;">覆盖</span>
<div class="a" style="left:0px;top:614px;width:941px;height:61px;background:#1f1f1f;"></div>
<div class="a" style="left:0px;top:614px;width:61px;height:61px;background:#f3f3f3;background:linear-gradient(90deg,#dcdcdc 0%,#f4f4f4 8%,#fafafa 45%,#ececec 65%,#cfcfcf 82%,#a2a2a2 100%)"></div>
<div class="a" style="left:0px;top:614px;width:61px;height:12px;background:transparent;background:linear-gradient(180deg,rgba(60,60,60,0.42) 0%,rgba(90,90,90,0.15) 45%,rgba(120,120,120,0) 100%)"></div>
<div class="a" style="left:61px;top:614px;width:46px;height:54px;background:#181818;"></div>
<div class="a" style="left:107px;top:614px;width:1px;height:54px;background:#2b2b2b;"></div>
<div class="a" style="left:61px;top:667px;width:880px;height:1px;background:#2b2b2b;"></div>
<div class="a" style="left:61px;top:668px;width:880px;height:7px;background:#181818;"></div>
<div class="a" style="left:61px;top:668px;width:33px;height:7px;background:#0078d4;"></div>
<svg class="a" style="left:0px;top:609px" width="5" height="5" viewBox="0 0 5 5"><path d="M0 0V5H5A5 5 0 0 1 0 0Z" fill="#9c9c9c"/></svg>
<svg class="a" style="left:72px;top:631px" width="24" height="24" viewBox="0 0 24 24"><g fill="none" stroke="#868686" stroke-width="1.7" stroke-linejoin="round"><circle cx="12" cy="12" r="2.6"/><path d="M10.3 1.8h3.4l.5 2.9 1.9.8 2.4-1.7 2.4 2.4-1.7 2.4.8 1.9 2.9.5v3.4l-2.9.5-.8 1.9 1.7 2.4-2.4 2.4-2.4-1.7-1.9.8-.5 2.9h-3.4l-.5-2.9-1.9-.8-2.4 1.7-2.4-2.4 1.7-2.4-.8-1.9-2.9-.5v-3.4l2.9-.5.8-1.9-1.7-2.4 2.4-2.4 2.4 1.7 1.9-.8z"/></g></svg>
<svg class="a" style="left:103px;top:671px" width="14" height="4" viewBox="0 0 14 4"><circle cx="6.3" cy="6.3" r="5.4" fill="none" stroke="#cfcfcf" stroke-width="1.1"/></svg>
<span class="a t" id="t167" style="left:120.5px;top:670.5px;font-size:13px;line-height:16px;color:#cfcfcf;">0</span>
<svg class="a" style="left:130px;top:671px" width="14" height="4" viewBox="0 0 14 4"><path d="M0.5 12L6.5 1L12.5 12Z" fill="none" stroke="#cfcfcf" stroke-width="1.1"/></svg>
<span class="a t" id="t168" style="left:147.5px;top:670.5px;font-size:13px;line-height:16px;color:#cfcfcf;">0</span>
<svg class="a" style="left:169px;top:670px" width="15" height="5" viewBox="0 0 15 5"><path d="M3.5 1.5Q0.5 6 3.5 11M6 3Q4.2 6 6 9M11.5 1.5Q14.5 6 11.5 11M9 3Q10.8 6 9 9" fill="none" stroke="#cfcfcf" stroke-width="1.1"/></svg>
<svg class="a" style="left:72px;top:669px" width="14" height="6" viewBox="0 0 14 6"><path d="M10 2.2L4.5 9" stroke="#fff" stroke-width="1.4" fill="none"/></svg>
<div class="a" style="left:182px;top:475px;width:142px;height:197px;background:#fff;box-sizing:border-box;border:1px solid #6f6f6f"></div>
<div class="a" style="left:184px;top:477px;width:138px;height:19px;background:#cce4f7;box-sizing:border-box;border:1px solid #2f7fd6;border-radius:2px"></div>
<div class="a" style="left:184px;top:629px;width:138px;height:19px;background:#e5f1fb;"></div>
<span class="a t" id="t169" style="left:186.5px;top:478.5px;font-size:12px;line-height:16px;color:#000;letter-spacing:-0.131px;">COMP_STORED (0)</span>
<span class="a t" id="t170" style="left:186.5px;top:497.5px;font-size:12px;line-height:16px;color:#000;letter-spacing:0.003px;">COMP_SHRUNK (1)</span>
<span class="a t" id="t171" style="left:186.5px;top:516.5px;font-size:12px;line-height:16px;color:#000;letter-spacing:-0.123px;">COMP_REDUCED1 (2)</span>
<span class="a t" id="t172" style="left:186.5px;top:535.5px;font-size:12px;line-height:16px;color:#000;letter-spacing:-0.123px;">COMP_REDUCED2 (3)</span>
<span class="a t" id="t173" style="left:186.5px;top:554.5px;font-size:12px;line-height:16px;color:#000;letter-spacing:-0.123px;">COMP_REDUCED3 (4)</span>
<span class="a t" id="t174" style="left:186.5px;top:573.5px;font-size:12px;line-height:16px;color:#000;letter-spacing:-0.123px;">COMP_REDUCED4 (5)</span>
<span class="a t" id="t175" style="left:186.5px;top:592.5px;font-size:12px;line-height:16px;color:#000;letter-spacing:0.050px;">COMP_IMPLODED (6)</span>
<span class="a t" id="t176" style="left:186.5px;top:611.5px;font-size:12px;line-height:16px;color:#000;letter-spacing:0.063px;">COMP_TOKEN (7)</span>
<span class="a t" id="t177" style="left:186.5px;top:630.5px;font-size:12px;line-height:16px;color:#000;letter-spacing:-0.218px;">COMP_DEFLATE (8)</span>
<span class="a t" id="t178" style="left:186.5px;top:649.5px;font-size:12px;line-height:16px;color:#000;letter-spacing:-0.142px;">COMP_DEFLATE64 (9)</span>
<div class="a" style="left:182px;top:630px;width:128px;height:19px;background:transparent;box-sizing:border-box;border:2px solid #e5323c"></div>
<svg class="a" style="left:12px;top:2px" width="14" height="18" viewBox="0 0 14 18"><path d="M0.5 0.5H9.5L13.0 4V17.0H0.5Z" fill="#f7f8ff" stroke="#aab9e2" stroke-width="1"/><path d="M9.5 0.5V4H13.0" fill="#dfe5f7" stroke="#aab9e2" stroke-width="0.8"/></svg>
<svg class="a" style="left:35px;top:8px" width="10" height="6" viewBox="0 0 10 6"><path d="M0.5 0.5L5 5L9.5 0.5" stroke="#757575" stroke-width="1.1" fill="none"/></svg>
<svg class="a" style="left:47px;top:2px" width="22" height="17" viewBox="0 0 22 17"><path d="M1 15V2.5Q1 1 2.5 1H5.5L7 3H13.5V6.5H6Z" fill="#fbe694" stroke="#dfb84f" stroke-width="1" stroke-linejoin="round"/><path d="M6.5 6.5H21L14 15.5H1Z" fill="#fbe694" stroke="#dfb84f" stroke-width="1" stroke-linejoin="round"/></svg>
<svg class="a" style="left:74px;top:8px" width="10" height="6" viewBox="0 0 10 6"><path d="M0.5 0.5L5 5L9.5 0.5" stroke="#757575" stroke-width="1.1" fill="none"/></svg>
<svg class="a" style="left:88px;top:1px" width="18" height="19" viewBox="0 0 18 19"><rect x="0" y="0" width="18" height="19" rx="1.5" fill="#5b9de6"/><rect x="2" y="0" width="14" height="9.9" fill="#fafbff"/><rect x="3" y="11.8" width="11" height="6.2" fill="#e3e3e6"/><rect x="4" y="12.9" width="3.2" height="4.9" fill="#3f7fd0"/></svg>
<svg class="a" style="left:114px;top:1px" width="20" height="19" viewBox="0 0 20 19"><path d="M9.0 0.5H15.5L19.0 4V14.0H9.0Z" fill="#f7f8ff" stroke="#aab9e2" stroke-width="1"/><path d="M15.5 0.5V4H19.0" fill="#dfe5f7" stroke="#aab9e2" stroke-width="0.8"/><rect x="0" y="4.5" width="13" height="14" rx="1.5" fill="#5b9de6"/><rect x="2" y="4.5" width="9" height="7.3" fill="#fafbff"/><rect x="3" y="13.2" width="6" height="4.3" fill="#e3e3e6"/><rect x="4" y="14.0" width="2.3" height="3.6" fill="#3f7fd0"/></svg>
<svg class="a" style="left:141px;top:1px" width="20" height="19" viewBox="0 0 20 19"><path d="M8 1H18.5Q19.5 1 19.5 2V12L17 14.5V3.5H8Z" fill="#5b9de6"/><path d="M9.5 1H17.5V3.5H9.5Z" fill="#fafbff"/><path d="M4.5 3H16Q17 3 17 4V14.5L14 17V6H4.5Z" fill="#5b9de6"/><path d="M6 3H15.2V6H6Z M14.2 6H15.2V15H14.2Z" fill="#fafbff"/><rect x="0" y="5.3" width="13.5" height="13.5" rx="1.5" fill="#5b9de6"/><rect x="2" y="5.3" width="9.5" height="7.0" fill="#fafbff"/><rect x="3" y="13.7" width="6.5" height="4.1" fill="#e3e3e6"/><rect x="4" y="14.5" width="2.4" height="3.5" fill="#3f7fd0"/></svg>
<svg class="a" style="left:170px;top:3px" width="17" height="15" viewBox="0 0 17 15"><path d="M0.7 14.3V2Q0.7 0.7 2 0.7H4.5L6 3H16.3V14.3Z" fill="#fbe694" stroke="#dfb84f" stroke-width="1.2" stroke-linejoin="round"/><path d="M1 5H16" stroke="#dfb84f" stroke-width="0.8"/></svg>
<svg class="a" style="left:195px;top:1px" width="21" height="21" viewBox="0 0 21 21"><path d="M9.0 10.0V2.0Q9.0 1.0 10.0 1.0H12.0L13.0 2.5H20.5V10.0Z" fill="#fbe694" stroke="#dfb84f" stroke-width="1" stroke-linejoin="round"/><path d="M5.0 14.5V6.5Q5.0 5.5 6.0 5.5H8.0L9.0 7H16.5V14.5Z" fill="#fbe694" stroke="#dfb84f" stroke-width="1" stroke-linejoin="round"/><path d="M1.0 19.5V11.5Q1.0 10.5 2.0 10.5H4.0L5.0 12H12.5V19.5Z" fill="#fbe694" stroke="#dfb84f" stroke-width="1" stroke-linejoin="round"/></svg>
<div class="a" style="left:224px;top:6px;width:1px;height:10px;background:#777;"></div>
<svg class="a" style="left:235px;top:1px" width="17" height="19" viewBox="0 0 17 19"><path d="M3.8 0.4L6.6 0.4L9.8 10L7.6 10.8Z" fill="#fff"/><path d="M8.2 0.4L10.3 1.2L9.8 10.6L7.8 10.2Z" fill="#eef0f8"/><circle cx="5.6" cy="14.8" r="2.4" fill="none" stroke="#5b9de6" stroke-width="1.5"/><circle cx="12.6" cy="11.9" r="2.4" fill="none" stroke="#5b9de6" stroke-width="1.5"/><path d="M8.6 10L6.6 12.8M8.8 9.8L10.6 10.8" stroke="#5b9de6" stroke-width="1.5"/></svg>
<svg class="a" style="left:262px;top:2px" width="18" height="18" viewBox="0 0 18 18"><path d="M0.5 0.5H7L10.5 4V13.0H0.5Z" fill="#f7f8ff" stroke="#aab9e2" stroke-width="1"/><path d="M7 0.5V4H10.5" fill="#dfe5f7" stroke="#aab9e2" stroke-width="0.8"/><path d="M7.0 4.5H13.5L17.0 8V17.0H7.0Z" fill="#f7f8ff" stroke="#aab9e2" stroke-width="1"/><path d="M13.5 4.5V8H17.0" fill="#dfe5f7" stroke="#aab9e2" stroke-width="0.8"/></svg>
<svg class="a" style="left:289px;top:1px" width="19" height="19" viewBox="0 0 19 19"><rect x="0.7" y="1.7" width="15" height="16" rx="1.5" fill="#fbe694" stroke="#dfb84f" stroke-width="1.2"/><path d="M5 3V1.5Q5 0.5 6 0.5H10.5Q11.5 0.5 11.5 1.5V3Z" fill="#f3f4fa" stroke="#aab9e2" stroke-width="0.8"/><path d="M9.0 8.0H15.0L18.0 11.0V18.5H9.0Z" fill="#f7f8ff" stroke="#aab9e2" stroke-width="1"/><path d="M15.0 8.0V11.0H18.0" fill="#dfe5f7" stroke="#aab9e2" stroke-width="0.8"/></svg>
<svg class="a" style="left:316px;top:3px" width="19" height="17" viewBox="0 0 19 17"><path d="M1 1V8.5H8.5" stroke="#5b9de6" stroke-width="3" fill="none"/><path d="M2 7.5C5 2.5 10 1.5 13.5 3.8C17.5 6.5 17 12 11.5 15.5" stroke="#5b9de6" stroke-width="2.6" fill="none"/></svg>
<svg class="a" style="left:343px;top:3px" width="19" height="17" viewBox="0 0 19 17"><path d="M18 1V8.5H10.5" stroke="#c9c9c9" stroke-width="3" fill="none"/><path d="M17 7.5C14 2.5 9 1.5 5.5 3.8C1.5 6.5 2 12 7.5 15.5" stroke="#c9c9c9" stroke-width="2.6" fill="none"/></svg>
<div class="a" style="left:371px;top:6px;width:1px;height:10px;background:#777;"></div>
<svg class="a" style="left:380px;top:0px" width="22" height="22" viewBox="0 0 22 22"><path d="M2.2 19.8L9.5 12.5" stroke="#fbe694" stroke-width="2.8" stroke-linecap="round"/><circle cx="14" cy="8" r="6.5" fill="#fbfbff" stroke="#aab9e2" stroke-width="1.2"/></svg>
<svg class="a" style="left:408px;top:0px" width="21" height="21" viewBox="0 0 21 21"><text x="0" y="19.5" font-family="Liberation Sans,sans-serif" font-size="17" fill="#5b9de6">A</text><text x="9.5" y="13.5" font-family="Liberation Sans,sans-serif" font-size="15" fill="#3f7fd0">B</text><path d="M2.5 4H6.5V1L11 5.5L6.5 10V7H2.5Z" fill="#f7d768"/></svg>
<svg class="a" style="left:435px;top:1px" width="21" height="21" viewBox="0 0 21 21"><path d="M1 12.5V2Q1 0.7 2.2 0.7H4.5L6 2.8H13V12.5Z" fill="#fbe694" stroke="#dfb84f" stroke-width="1"/><path d="M1.5 12L5.5 4.5H13" stroke="#dfb84f" stroke-width="1" fill="none"/><path d="M5 19.5L10 14" stroke="#f4d566" stroke-width="2.4" stroke-linecap="round"/><circle cx="14.5" cy="10" r="4.7" fill="#fbfbff" stroke="#aab9e2" stroke-width="1.1"/></svg>
<svg class="a" style="left:462px;top:3px" width="18" height="16" viewBox="0 0 18 16"><path d="M1 8H15M8.5 1.5L15.5 8L8.5 14.5" stroke="#5b9de6" stroke-width="2.8" fill="none"/></svg>
<div class="a" style="left:491px;top:6px;width:1px;height:10px;background:#777;"></div>
<svg class="a" style="left:503px;top:0px" width="20" height="22" viewBox="0 0 20 22"><path d="M2.6 1.6Q9 0.2 16.6 1.2Q18.6 1.6 17.6 3.4Q16.6 9 17.4 15.6Q10.5 18 2.6 17.8Q1 17.2 2.4 16Q4.8 9.5 3.6 4.4Q1 3.4 2.6 1.6Z" fill="#fbfbff" stroke="#aab9e2" stroke-width="0.9"/><path d="M3.6 4.4Q10.5 4.8 17.4 3.6" stroke="#aab9e2" stroke-width="0.8" fill="none"/><path d="M0 7L8 13.5L0 21Z" fill="#5b9de6"/><path d="M14.5 19.3H18.5L16.5 21.3Z" fill="#777"/></svg>
<svg class="a" style="left:530px;top:0px" width="20" height="22" viewBox="0 0 20 22"><path d="M2.6 1.6Q9 0.2 16.6 1.2Q18.6 1.6 17.6 3.4Q16.6 9 17.4 15.6Q10.5 18 2.6 17.8Q1 17.2 2.4 16Q4.8 9.5 3.6 4.4Q1 3.4 2.6 1.6Z" fill="#fbe28a" stroke="#dfb84f" stroke-width="0.9"/><path d="M3.6 4.4Q10.5 4.8 17.4 3.6" stroke="#dfb84f" stroke-width="0.8" fill="none"/><g fill="#d9a83c"><circle cx="7.5" cy="7.4" r="1.2"/><circle cx="10.5" cy="10.2" r="0.7"/><circle cx="12.5" cy="10.2" r="0.7"/><circle cx="14.6" cy="10" r="1"/><circle cx="14" cy="13.8" r="1.2"/><circle cx="11.2" cy="14.4" r="0.7"/><circle cx="9" cy="14.4" r="0.7"/></g><path d="M0 7L8 13.5L0 21Z" fill="#5b9de6"/><path d="M14.5 19.3H18.5L16.5 21.3Z" fill="#777"/></svg>
<div class="a" style="left:557px;top:6px;width:1px;height:10px;background:#777;"></div>
<div class="a" style="left:564px;top:-1px;width:27px;height:25px;background:#393835;box-sizing:border-box;border:1px solid #777"></div>
<span class="a t" id="t179" style="left:568.5px;top:3.5px;font-size:11px;line-height:16px;color:#4c90da;font-family:'Liberation Mono',monospace;letter-spacing:0.062px;">Hex</span>
<svg class="a" style="left:595px;top:2px" width="19" height="18" viewBox="0 0 19 18"><path d="M0 1H17M0 4H9M0 7H9M0 10H17M0 13H9M0 16H9" stroke="#d4d4d4" stroke-width="1.3"/><path d="M13 1V5.5H11.5M13 10V14.5H11.5" stroke="#d4d4d4" stroke-width="1.8" fill="none"/><path d="M13 3L9 5.7L13 8.4Z M13 12L9 14.7L13 17.4Z" fill="#d4d4d4"/><path d="M14 4.5H17.5V1M14 13.5H17.5V10" stroke="#d4d4d4" stroke-width="1.6" fill="none"/></svg>
<svg class="a" style="left:624px;top:4px" width="13" height="14" viewBox="0 0 13 14"><path d="M7 0.5H12.5M7 0.5V13.5M10.5 0.5V13.5" stroke="#c9c9c9" stroke-width="1.5" fill="none"/><path d="M7 0H5Q0.5 0 0.5 4Q0.5 8 5 8H7Z" fill="#c9c9c9"/></svg>
<svg class="a" style="left:650px;top:4px" width="17" height="15" viewBox="0 0 17 15"><path d="M0 1.0H7.5M9 1.0H16.5M0 3.3H7.5M9 3.3H16.5M0 5.6H7.5M9 5.6H16.5M0 7.9H7.5M9 7.9H16.5M0 10.2H7.5M9 10.2H16.5M0 12.5H7.5M9 12.5H16.5M0 14.8H7.5M9 14.8H16.5" stroke="#5b9de6" stroke-width="1.05"/></svg>
<svg class="a" style="left:674px;top:0px" width="21" height="22" viewBox="0 0 21 22"><path d="M2 1H9.5L14 10.5L7 14.5L1 7Z" fill="#fdfdff" stroke="#aab9e2" stroke-width="0.9"/><path d="M14 10.5L19 16.5L8.5 17L7 14.5Z" fill="#f9e08a" stroke="#dfb84f" stroke-width="0.6"/><path d="M17 18.5H21L19 20.5Z" fill="#777"/></svg>
<div class="a" style="left:704px;top:6px;width:1px;height:10px;background:#777;"></div>
<svg class="a" style="left:716px;top:2px" width="16" height="18" viewBox="0 0 16 18"><rect x="0" y="0" width="15.5" height="17.5" rx="1.5" fill="#5b9de6"/><rect x="2" y="1.8" width="11.5" height="3.6" fill="#fbfbff"/><rect x="2.0" y="7.0" width="2" height="2" fill="#fbe694"/><rect x="2.0" y="10.3" width="2" height="2" fill="#fbe694"/><rect x="2.0" y="13.6" width="2" height="2" fill="#fbe694"/><rect x="5.2" y="7.0" width="2" height="2" fill="#fbe694"/><rect x="5.2" y="10.3" width="2" height="2" fill="#fbe694"/><rect x="5.2" y="13.6" width="2" height="2" fill="#fbe694"/><rect x="8.4" y="7.0" width="2" height="2" fill="#fbe694"/><rect x="8.4" y="10.3" width="2" height="2" fill="#fbe694"/><rect x="8.4" y="13.6" width="2" height="2" fill="#fbe694"/><rect x="11.6" y="7.0" width="2" height="2" fill="#fbe694"/><rect x="11.6" y="10.3" width="2" height="2" fill="#fbe694"/><rect x="11.6" y="13.6" width="2" height="2" fill="#fbe694"/></svg>
<svg class="a" style="left:742px;top:1px" width="18" height="20" viewBox="0 0 18 20"><path d="M6.0 0.5H12.5L16.0 4V13.0H6.0Z" fill="#f7f8ff" stroke="#aab9e2" stroke-width="1"/><path d="M12.5 0.5V4H16.0" fill="#dfe5f7" stroke="#aab9e2" stroke-width="0.8"/><path d="M1.0 3.5H7.5L11.0 7V16.5H1.0Z" fill="#f7f8ff" stroke="#aab9e2" stroke-width="1"/><path d="M7.5 3.5V7H11.0" fill="#dfe5f7" stroke="#aab9e2" stroke-width="0.8"/><text x="4" y="19.5" font-family="Liberation Sans,sans-serif" font-weight="bold" font-size="16" fill="#f7dc7a" stroke="#d6ae45" stroke-width="0.5">?</text></svg>
<svg class="a" style="left:768px;top:2px" width="20" height="18" viewBox="0 0 20 18"><path d="M8 10.5H19V14H8V17.5L0.5 12.2L8 7Z" fill="#5b9de6"/><path d="M11.5 3.5H1V7H11.5V10.5L19 5.2L11.5 0Z" fill="#fbdf7a"/></svg>
<svg class="a" style="left:795px;top:1px" width="21" height="20" viewBox="0 0 21 20"><path d="M4 17L8.5 5.5L12 13L14.5 10.5L18.5 17Z" fill="#5b9de6"/><path d="M5.5 17V13M7 17V9M8.5 17V6M10 17V9M11.5 17V12M13 17V12.5M14.5 17V11M16 17V13.5" stroke="#3f78c0" stroke-width="0.6"/><path d="M1.5 0.5V18.5H20.5" stroke="#f7d768" stroke-width="2" fill="none"/></svg>
<svg class="a" style="left:822px;top:1px" width="20" height="21" viewBox="0 0 20 21"><path d="M1 5H9.5M5.2 0.8V9.3M10.5 14.5H18M15.5 2L3 16.5" stroke="#5b9de6" stroke-width="2.2" fill="none"/><path d="M15.5 18.5H19.5L17.5 20.5Z" fill="#777"/></svg>
<svg class="a" style="left:850px;top:2px" width="19" height="18" viewBox="0 0 19 18"><path d="M6 1.5H17.5V5.5H12.5L15 9L12.5 12.5H17.5V16.5H6V13L9 9L6 5Z" fill="#5b9de6"/><path d="M1 6.5L5.5 11L14 1.5" stroke="#fbdf7a" stroke-width="2.4" fill="none"/></svg>
<svg class="a" style="left:876px;top:0px" width="21" height="22" viewBox="0 0 21 22"><text x="10" y="8.5" font-family="Liberation Sans,sans-serif" font-size="9.5" fill="#5b9de6">10</text><text x="0" y="20.5" font-family="Liberation Sans,sans-serif" font-size="9.5" fill="#5b9de6">16</text><path d="M9 2Q4.5 2 4.5 6V7.5H7.5L3.5 12L-0.5 7.5H2V6Q2 0.5 9 0.5Z" fill="#5b9de6"/><path d="M11 19.5Q16 19.5 16 15V13.5H13L17 9L21 13.5H18.5V15Q18.5 21 11 21Z" fill="#5b9de6"/></svg>
<div class="a" style="left:905px;top:6px;width:1px;height:10px;background:#777;"></div>
<div class="a" style="left:921px;top:7px;width:4px;height:9px;background:#d0d0d0;"></div>
<div class="a" style="left:926.5px;top:7px;width:4px;height:9px;background:#d0d0d0;"></div>
</div></body></html>
